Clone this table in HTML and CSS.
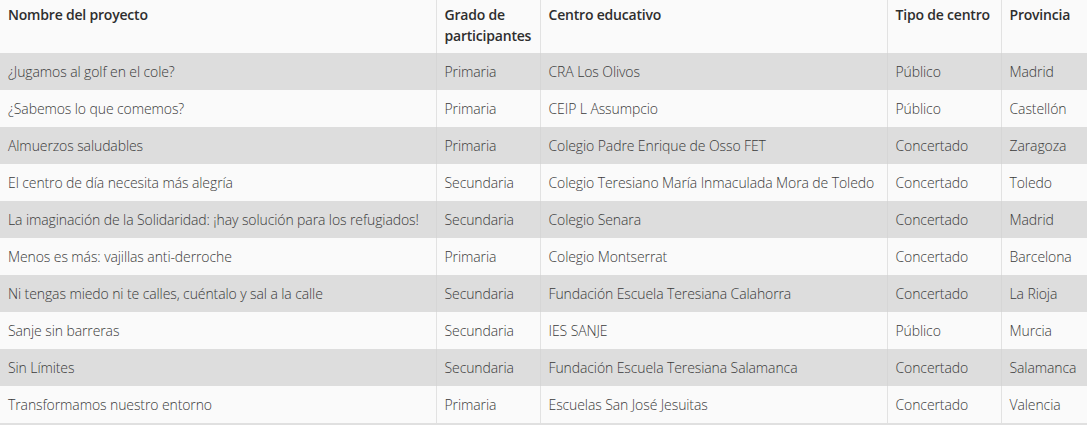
FILE: index.html
```html
<!DOCTYPE html>
<html lang="es">
<head>
<meta charset="utf-8">
<title>Proyectos</title>
<link rel="stylesheet" href="styles.css">
</head>
<body>
<table class="projects">
  <colgroup>
    <col class="c1"><col class="c2"><col class="c3"><col class="c4"><col class="c5">
  </colgroup>
  <thead>
    <tr>
      <th>Nombre del proyecto</th>
      <th class="wrap">Grado de participantes</th>
      <th>Centro educativo</th>
      <th>Tipo de centro</th>
      <th>Provincia</th>
    </tr>
  </thead>
  <tbody>
    <tr><td>¿Jugamos al golf en el cole?</td><td>Primaria</td><td>CRA Los Olivos</td><td>Público</td><td>Madrid</td></tr>
    <tr><td>¿Sabemos lo que comemos?</td><td>Primaria</td><td>CEIP L Assumpcio</td><td>Público</td><td>Castellón</td></tr>
    <tr><td>Almuerzos saludables</td><td>Primaria</td><td>Colegio Padre Enrique de Osso FET</td><td>Concertado</td><td>Zaragoza</td></tr>
    <tr><td>El centro de día necesita más alegría</td><td>Secundaria</td><td>Colegio Teresiano María Inmaculada Mora de Toledo</td><td>Concertado</td><td>Toledo</td></tr>
    <tr><td>La imaginación de la Solidaridad: ¡hay solución para los refugiados!</td><td>Secundaria</td><td>Colegio Senara</td><td>Concertado</td><td>Madrid</td></tr>
    <tr><td>Menos es más: vajillas anti-derroche</td><td>Primaria</td><td>Colegio Montserrat</td><td>Concertado</td><td>Barcelona</td></tr>
    <tr><td>Ni tengas miedo ni te calles, cuéntalo y sal a la calle</td><td>Secundaria</td><td>Fundación Escuela Teresiana Calahorra</td><td>Concertado</td><td>La Rioja</td></tr>
    <tr><td>Sanje sin barreras</td><td>Secundaria</td><td>IES SANJE</td><td>Público</td><td>Murcia</td></tr>
    <tr><td>Sin Límites</td><td>Secundaria</td><td>Fundación Escuela Teresiana Salamanca</td><td>Concertado</td><td>Salamanca</td></tr>
    <tr><td>Transformamos nuestro entorno</td><td>Primaria</td><td>Escuelas San José Jesuitas</td><td>Concertado</td><td>Valencia</td></tr>
  </tbody>
</table>
</body>
</html>
```

FILE: styles.css
```css
html, body {
  margin: 0;
  padding: 0;
  background: #fafafa;
  overflow: hidden;
}

.projects {
  border-collapse: collapse;
  table-layout: fixed;
  width: 1100px;
  font-family: "Open Sans", "Liberation Sans", sans-serif;
  font-size: 14px;
  color: #3a3a3a;
}

.c1 { width: 436px; }
.c2 { width: 104px; }
.c3 { width: 347px; }
.c4 { width: 114px; }
.c5 { width: 99px; }

.projects th,
.projects td {
  text-align: left;
  vertical-align: top;
  padding: 8px;
  border-left: 1px solid #e2e2e2;
  white-space: nowrap;
}

.projects th:first-child,
.projects td:first-child {
  border-left: none;
}

.projects th {
  font-weight: 600;
  color: #2e2e2e;
  line-height: 21px;
  letter-spacing: -0.2px;
  padding-top: 4px;
  padding-bottom: 3px;
  height: 46px;
  box-sizing: content-box;
}

.projects th.wrap {
  white-space: normal;
}

.projects td {
  font-weight: 300;
  line-height: 20px;
  height: 20px;
  letter-spacing: -0.1px;
  padding-top: 9px;
  padding-bottom: 8px;
}

.projects tbody tr:nth-child(odd) td {
  background: #dddddd;
  border-left-color: #d6d6d6;
}

.projects tbody tr:nth-child(even) td {
  background: #fafafa;
}

.projects tbody tr:last-child td {
  border-bottom: 3px solid #e0e0e0;
}
```
